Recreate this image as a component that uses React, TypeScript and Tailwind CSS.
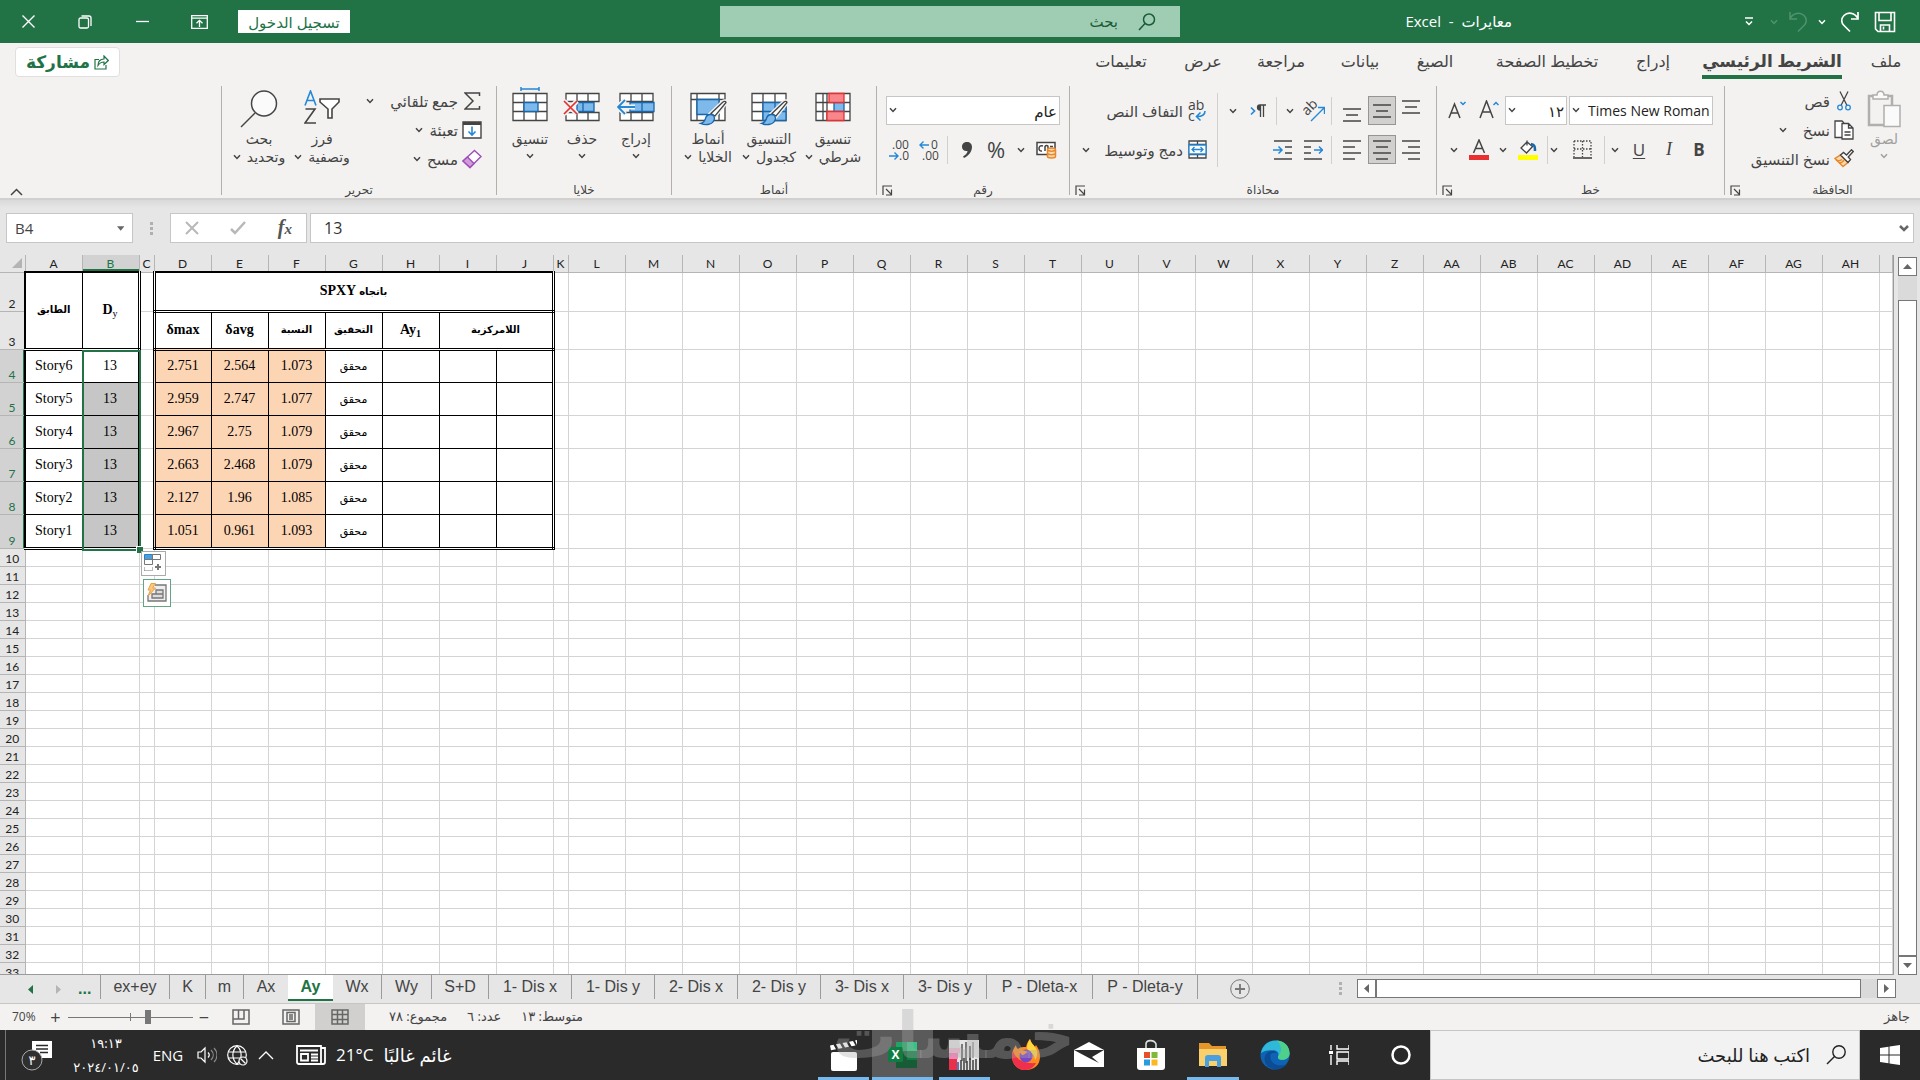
import type { ReactNode } from 'react';
import clsx from 'clsx';

type IconProps = { className?: string };

const INK = '#444444';
const BLUE = '#2488d8';

function Chevron({ className }: IconProps) {
  return (
    <svg viewBox="0 0 8 6" className={clsx('w-2 h-1.5 shrink-0', className)} fill="none" stroke="currentColor" strokeWidth="1.5">
      <path d="M1 1.2 4 4.4 7 1.2" />
    </svg>
  );
}

function Separator({ tall }: { tall?: boolean }) {
  return <div className={clsx('w-px shrink-0 bg-[#d2d0ce]', tall ? 'h-[74px]' : 'h-7')} />;
}

/* ---------- title bar ---------- */

function TitleIcon({ children, label, className }: { children: ReactNode; label: string; className?: string }) {
  return (
    <button type="button" aria-label={label} className={clsx('h-full flex items-center justify-center shrink-0', className)}>
      {children}
    </button>
  );
}

function TitleBar() {
  return (
    <header dir="rtl" className="h-[43px] shrink-0 bg-[#217346] text-white flex items-center justify-between text-[15px]">
      <div className="flex-1 h-full flex items-center pr-6">
        <TitleIcon label="حفظ" className="w-[22px]">
          <svg viewBox="0 0 22 22" className="w-[22px] h-[22px]" fill="none" stroke="#fff" strokeWidth="1.6">
            <path d="M1.5 1.5h19v19H4l-2.5-2.5zM5 1.5v8h12v-8M6.5 20.5V14h9v6.5M9.5 15.5v3" />
          </svg>
        </TitleIcon>
        <TitleIcon label="إعادة" className="w-12">
          <svg viewBox="0 0 20 22" className="w-5 h-[22px]" fill="none" stroke="#fff" strokeWidth="1.7">
            <path d="M18 1v7h-7M18 7.5C15 2 8 .5 4 4.5c-3.5 3.5-2.5 7.5 0 10l6 6" />
          </svg>
        </TitleIcon>
        <Chevron />
        <TitleIcon label="تراجع" className="w-10">
          <svg viewBox="0 0 20 22" className="w-5 h-[22px]" fill="none" stroke="#4f9370" strokeWidth="1.5">
            <path d="M2 1v7h7M2 7.5C5 2 12 .5 16 4.5c3.5 3.5 2.5 7.5 0 10l-6 6" />
          </svg>
        </TitleIcon>
        <Chevron className="text-[#4f9370]" />
        <TitleIcon label="تخصيص" className="w-[42px]">
          <svg viewBox="0 0 10 10" className="w-2.5 h-2.5" fill="none" stroke="#fff" strokeWidth="1.5">
            <path d="M1 1h8M2 4.5l3 3 3-3" />
          </svg>
        </TitleIcon>
        <h1 className="flex-1 pr-[216px] whitespace-nowrap">
          معايرات&nbsp; -&nbsp; Excel
        </h1>
      </div>
      <label className="w-[460px] h-[31px] shrink-0 bg-[#9fcdb3] text-[#185c37] flex items-center pr-6 gap-5">
        <svg viewBox="0 0 18 18" className="w-[18px] h-[18px]" fill="none" stroke="currentColor" strokeWidth="1.5">
          <circle cx="11" cy="6.5" r="5.5" />
          <path d="M7 10.5 1 17" />
        </svg>
        <input aria-label="بحث" placeholder="بحث" className="flex-1 bg-transparent outline-none placeholder:text-[#185c37]" />
      </label>
      <div className="flex-1 h-full flex items-center justify-end pl-1">
        <button type="button" className="h-[23px] w-28 bg-white text-[#217346] leading-5 whitespace-nowrap">
          تسجيل الدخول
        </button>
        <TitleIcon label="خيارات عرض الشريط" className="w-[78px]">
          <svg viewBox="0 0 17 14" className="w-[17px] h-3.5" fill="none" stroke="#fff" strokeWidth="1.3">
            <path d="M.7.7h15.6v12.6H.7zM.7 3.2h15.6M8.5 12V5.500M5.5 8.3l3-3 3 3" />
          </svg>
        </TitleIcon>
        <TitleIcon label="تصغير" className="w-9">
          <svg viewBox="0 0 13 13" className="w-[13px] h-[13px]" stroke="#fff" strokeWidth="1.3"><path d="M0 6.5h13" /></svg>
        </TitleIcon>
        <TitleIcon label="استعادة" className="w-[78px]">
          <svg viewBox="0 0 14 14" className="w-3.5 h-3.5" fill="none" stroke="#fff" strokeWidth="1.3">
            <rect x="1" y="3" width="9.5" height="10" rx="1.5" />
            <path d="M3.5 1h7.5a2 2 0 0 1 2 2v8" />
          </svg>
        </TitleIcon>
        <TitleIcon label="إغلاق" className="w-9">
          <svg viewBox="0 0 13 13" className="w-[13px] h-[13px]" stroke="#fff" strokeWidth="1.4"><path d="M.5.5l12 12M12.5.5l-12 12" /></svg>
        </TitleIcon>
        <span className="w-1.5" />
      </div>
    </header>
  );
}

/* ---------- ribbon ---------- */

const ribbonTabs = [
  { label: 'ملف', width: 'w-[54px]' },
  { label: 'الشريط الرئيسي', width: 'w-[174px]', active: true },
  { label: 'إدراج', width: 'w-[64px]' },
  { label: 'تخطيط الصفحة', width: 'w-[148px]' },
  { label: 'الصيغ', width: 'w-[76px]' },
  { label: 'بيانات', width: 'w-[74px]' },
  { label: 'مراجعة', width: 'w-[84px]' },
  { label: 'عرض', width: 'w-[72px]' },
  { label: 'تعليمات', width: 'w-[92px]' },
];

function RibbonTabs() {
  return (
    <nav dir="rtl" className="flex items-start pr-[7px] pl-[15px] h-9">
      {ribbonTabs.map((tab) => (
        <a
          key={tab.label}
          href="#"
          className={clsx(
            'h-9 flex justify-center leading-9 whitespace-nowrap text-[#444]',
            tab.width,
            tab.active ? 'font-bold text-[17px]' : 'text-[16px]',
          )}
        >
          <span className={clsx('h-9', tab.active && 'border-b-4 border-[#217346]')}>{tab.label}</span>
        </a>
      ))}
      <span className="flex-1" />
      <button
        type="button"
        className="mt-1 h-[30px] w-[105px] rounded-sm border border-[#e1dfdd] bg-white text-[#217346] font-bold text-[17px] leading-6 flex items-center justify-center gap-1"
      >
        <svg viewBox="0 0 15 15" className="w-[15px] h-[15px]" fill="none" stroke="#217346" strokeWidth="1.2">
          <path d="M5 4.5H1V14h11v-4M4 10.5c0-4 2-6.500 6-6.500V1l4.300 4.500L10 9.500V7c-3 0-4.500 1-6 3.500z" />
        </svg>
        مشاركة
      </button>
    </nav>
  );
}

function Group({ label, width, launcher, children }: { label: string; width: string; launcher?: boolean; children: ReactNode }) {
  return (
    <section className={clsx('h-[109px] shrink-0 border-l border-[#b3b0ad] flex flex-col', width)}>
      <div className="flex-1 min-h-0 flex">{children}</div>
      <div className="h-2.5 shrink-0 flex items-center justify-center text-[12px] leading-4">
        <span className="flex-1 text-center">{label}</span>
        {launcher && (
          <button type="button" aria-label={`خيارات ${label}`} className="w-5 flex justify-center">
            <svg viewBox="0 0 11 11" className="w-[11px] h-[11px]" fill="none" stroke={INK} strokeWidth="1.2">
              <path d="M1 10V1h9M4 4l5 5M9.5 4.500V10H4" />
            </svg>
          </button>
        )}
      </div>
    </section>
  );
}

function Tool({ label, className, active, children }: { label: string; className: string; active?: boolean; children: ReactNode }) {
  return (
    <button
      type="button"
      aria-label={label}
      className={clsx('h-[29px] shrink-0 flex items-center justify-center', className, active && 'bg-[#d2d0ce] border border-[#979593]')}
    >
      {children}
    </button>
  );
}

function BigButton({ icon, lines, width, split, muted }: { icon: ReactNode; lines: string[]; width: string; split?: boolean; muted?: boolean }) {
  return (
    <button type="button" className={clsx('shrink-0 flex flex-col items-center pt-1 text-[14px] leading-[18px]', width, muted && 'text-[#a19f9d]')}>
      <span className="h-10 flex items-start">{icon}</span>
      <span className="whitespace-nowrap">{lines[0]}</span>
      {split ? (
        <span className="h-4 flex items-center"><Chevron /></span>
      ) : (
        <span className="flex items-center gap-1.5 whitespace-nowrap">
          {lines[1]}
          <Chevron />
        </span>
      )}
    </button>
  );
}

function SmallButton({ icon, text, drop }: { icon: ReactNode; text: string; drop?: string }) {
  return (
    <button type="button" className="h-[29px] flex items-center text-[15px] leading-5 whitespace-nowrap">
      <span className="w-[26px] pl-0.5 flex justify-center">{icon}</span>
      <span>{text}</span>
      {drop && <Chevron className={drop} />}
    </button>
  );
}

function Combo({ value, label, width, ltr }: { value: string; label: string; width: string; ltr?: boolean }) {
  return (
    <div className={clsx('relative h-[29px] shrink-0', width)}>
      <select
        aria-label={label}
        dir={ltr ? 'ltr' : 'rtl'}
        className={clsx(
          'appearance-none w-full h-full bg-white border border-[#c8c6c4] leading-6 text-[#222] outline-none whitespace-nowrap',
          ltr ? 'pl-[18px] text-[14px]' : 'pr-0.5 text-[15px]',
        )}
      >
        <option>{value}</option>
      </select>
      <Chevron className="absolute left-[3px] top-[11px] pointer-events-none" />
    </div>
  );
}

function PasteIcon() {
  return (
    <svg viewBox="0 0 34 38" className="w-[34px] h-[38px]" fill="#f3f2f1" stroke="#b1afad" strokeWidth="1.5">
      <path d="M2 6h23v29H2z" strokeWidth="2.5" />
      <path d="M6 9V5h4c0-5 7-5 7 0h4v4z" fill="#fafafa" />
      <path d="M17 15.500h16v21H17z" fill="#fafafa" />
    </svg>
  );
}

function CutIcon() {
  return (
    <svg viewBox="0 0 14 20" className="w-3.5 h-5" fill="none" stroke={INK} strokeWidth="1.3">
      <path d="M3 .5l7 14M11 .5l-7 14" />
      <circle cx="3" cy="16.5" r="2.3" stroke={BLUE} />
      <circle cx="11" cy="16.5" r="2.3" stroke={BLUE} />
    </svg>
  );
}

function CopyIcon() {
  return (
    <svg viewBox="0 0 20 20" className="w-5 h-5" fill="#fff" stroke={INK} strokeWidth="1.3">
      <path d="M8 17.5H1V1h7l2 2" />
      <path d="M8 3.5h6.500L19 8v11H8zM14.500 3.500V8H19M10.500 12h6M10.500 15h6" />
    </svg>
  );
}

function FormatPainterIcon() {
  return (
    <svg viewBox="0 0 20 19" className="w-5 h-[19px]" fill="none" strokeWidth="1.4">
      <path d="M1 9.5 9 17.500l5-4L6.500 6z" fill="#fbd9ad" stroke="#e8872b" />
      <path d="M2 11c2 1 4 1 6-.5M5 14c2 0 4-1 5-3" stroke="#e8872b" />
      <path d="M6.500 6l3-2.500 3 2.500L17.500.8l1.700 1.700-5 5.500 2.300 2.500-2.500 3z" fill="#fff" stroke={INK} />
    </svg>
  );
}

const lineSets = {
  right: [[1, 1, 18], [7, 7, 12], [1, 13, 18], [7, 19, 12]],
  center: [[1, 1, 18], [4, 7, 12], [1, 13, 18], [4, 19, 12]],
  left: [[1, 1, 18], [1, 7, 12], [1, 13, 18], [1, 19, 12]],
};

function Lines({ kind }: { kind: keyof typeof lineSets }) {
  return (
    <svg viewBox="0 0 20 20" className="w-5 h-5 shrink-0" stroke={INK} strokeWidth="1.5">
      {lineSets[kind].map(([x, y, w]) => (
        <path key={y} d={`M${x} ${y}h${w}`} />
      ))}
    </svg>
  );
}

function ThreeLines() {
  return (
    <svg viewBox="0 0 20 14" className="w-5 h-3.5" stroke={INK} strokeWidth="1.5">
      <path d="M1 1h18M4 7h12M1 13h18" />
    </svg>
  );
}

function IndentIcon({ flip }: { flip?: boolean }) {
  return (
    <svg viewBox="0 0 20 20" className="w-5 h-5" fill="none" stroke={INK} strokeWidth="1.5">
      <path d={flip ? 'M1 1h18M12 7h7M12 13h7M1 19h18' : 'M1 1h18M1 7h7M1 13h7M1 19h18'} />
      <path d={flip ? 'M0 10h9M5.500 6.500 9 10l-3.500 3.500' : 'M11 10h9M16 6.500 19.500 10 16 13.500'} stroke={BLUE} />
    </svg>
  );
}

function TableGrid({ children }: { children?: ReactNode }) {
  return (
    <svg viewBox="0 0 36 36" className="w-9 h-9 overflow-visible" fill="none" strokeWidth="1.3">
      <path d="M1 3.5h34v27H1z" fill="#fff" stroke={INK} />
      <path d="M1 12.5h34M1 21.500h34M12 3.500v27M24 3.500v27" stroke={INK} />
      {children}
    </svg>
  );
}

function Brush() {
  return (
    <>
      <path d="M36 12.500 25 26l-4-2.500L33 12c1-1 3-1 3 .5z" fill="#fff" stroke="#f3f2f1" strokeWidth="4" />
      <path d="M36 12.500 25 26l-4-2.500L33 12c1-1 3-1 3 .5z" fill="#fff" stroke={INK} />
      <path d="M20.500 24.500c2 0 4 1.500 4 4-1 6-8 7.500-14 5 3-.5 4-2 5-5 .5-2 2.500-4 5-4z" fill="#7db9ea" stroke="#1866ab" />
    </>
  );
}

function DecimalIcon({ grow }: { grow?: boolean }) {
  return (
    <svg viewBox="0 0 20 22" direction="ltr" className="w-5 h-[22px]" fill={INK} fontSize="12" fontFamily="Open Sans">
      <text x={grow ? 12 : 3} y="10">{grow ? '0' : '.00'}</text>
      <text x={grow ? 3 : 10} y="21">{grow ? '.00' : '.0'}</text>
      <path
        d={grow ? 'M10 6H1M4.500 2.500 1 6l3.500 3.500' : 'M0 17h9M5.500 13.500 9 17l-3.500 3.500'}
        fill="none"
        stroke={BLUE}
        strokeWidth="1.4"
      />
    </svg>
  );
}

function Ribbon() {
  return (
    <div dir="rtl" className="shrink-0 h-[157px] bg-[#f3f2f1] text-[#444] border-b-2 border-[#d2d0ce]">
      <RibbonTabs />
      <div className="flex pt-[7px] h-[121px]">
        <Group label="الحافظة" width="w-[196px]" launcher>
          <div className="w-16 pr-3">
            <BigButton icon={<PasteIcon />} lines={['لصق']} width="w-[48px]" split muted />
          </div>
          <div className="flex flex-col items-start">
            <SmallButton icon={<CutIcon />} text="قص" />
            <SmallButton icon={<CopyIcon />} text="نسخ" drop="mr-4" />
            <SmallButton icon={<FormatPainterIcon />} text="نسخ التنسيق" />
          </div>
        </Group>

        <Group label="خط" width="w-[288px]" launcher>
          <div className="flex flex-col pt-2.5 pr-[11px] gap-2.5">
            <div className="flex gap-0.5">
              <Combo label="الخط" value="Times New Roman" width="w-36" ltr />
              <Combo label="حجم الخط" value="١٢" width="w-[62px]" />
              <Tool label="تكبير الخط" className="w-7">
                <svg viewBox="0 0 20 22" className="w-5 h-[22px]" fill="none" stroke={INK} strokeWidth="1.5">
                  <path d="M1 18 7.500 1 14 18M3.500 12h8" />
                  <path d="M14.500 5 17 2.500 19.500 5" stroke={BLUE} />
                </svg>
              </Tool>
              <Tool label="تصغير الخط" className="w-8">
                <svg viewBox="0 0 20 22" className="w-5 h-[22px]" fill="none" stroke={INK} strokeWidth="1.5">
                  <path d="M2 18 7.500 4 13 18M4 13h7" />
                  <path d="M13.500 2l2.500 2.500L18.500 2" stroke={BLUE} />
                </svg>
              </Tool>
            </div>
            <div className="flex items-center">
              <Tool label="غامق" className="w-7 font-bold text-[17px]">B</Tool>
              <Tool label="مائل" className="w-8 text-[18px] italic [font-family:'Liberation_Serif',serif]">I</Tool>
              <Tool label="تسطير" className="w-7 text-[17px] underline underline-offset-2">U</Tool>
              <Tool label="المزيد" className="w-5"><Chevron /></Tool>
              <Separator />
              <Tool label="حدود" className="w-11">
                <svg viewBox="0 0 19 19" className="w-[19px] h-[19px]" fill="none" stroke={INK} strokeWidth="1.3">
                  <path d="M1 1h17v16M1 1v16M9.500 1v16M1 9h17" strokeDasharray="1.500 1.500" />
                  <path d="M0 18h19" strokeWidth="1.6" />
                </svg>
              </Tool>
              <Tool label="المزيد" className="w-3"><Chevron /></Tool>
              <Separator />
              <Tool label="لون التعبئة" className="w-[38px]">
                <svg viewBox="0 0 20 21" className="w-5 h-[21px]" fill="none" stroke={INK} strokeWidth="1.3">
                  <path d="M9 3 3 9l5.500 5 6-6.500zM9 6.500V1.500" fill="#fff" />
                  <path d="M13 5c4 .5 4 3 4 7" stroke="#1866ab" strokeWidth="2.5" />
                  <path d="M0 18.500h20" stroke="#ffff00" strokeWidth="5" />
                </svg>
              </Tool>
              <Tool label="المزيد" className="w-3"><Chevron /></Tool>
              <Tool label="لون الخط" className="w-9">
                <svg viewBox="0 0 20 21" className="w-5 h-[21px]" fill="none" stroke={INK} strokeWidth="1.5">
                  <path d="M4.500 14 10 1l5.500 13M6.500 9.500h7" />
                  <path d="M0 18.500h20" stroke="#e83030" strokeWidth="5" />
                </svg>
              </Tool>
              <Tool label="المزيد" className="w-3.5"><Chevron /></Tool>
            </div>
          </div>
        </Group>

        <Group label="محاذاة" width="w-[367px]" launcher>
          <div className="flex flex-col pt-2.5 pr-2.5 gap-2.5">
            <div className="flex items-center">
              <Tool label="محاذاة لأعلى" className="w-[30px] pb-2"><ThreeLines /></Tool>
              <Tool label="محاذاة للوسط" className="w-7" active><ThreeLines /></Tool>
              <Tool label="محاذاة لأسفل" className="w-8 pt-2"><ThreeLines /></Tool>
              <span className="w-1" />
              <Separator />
              <Tool label="الاتجاه" className="w-[34px]">
                <svg viewBox="0 0 22 22" direction="ltr" className="w-[22px] h-[22px]" fill={INK}>
                  <text x="0" y="13" fontSize="14" fontFamily="Open Sans" transform="rotate(-45 6 10)">ab</text>
                  <path d="M8 21 21 8M15 7.500h6.500V14" fill="none" stroke={BLUE} strokeWidth="1.4" />
                </svg>
              </Tool>
              <Tool label="المزيد" className="w-3.5"><Chevron /></Tool>
              <span className="w-1.5" />
              <Separator />
              <Tool label="اتجاه النص" className="w-9">
                <svg viewBox="0 0 18 14" className="w-[18px] h-3.5" fill="none" stroke={INK} strokeWidth="1.3">
                  <path d="M17 1h-6M11 6a2.500 2.500 0 0 1 0-5zM11.500 1v12M14.500 1v12" fill={INK} />
                  <path d="M2 3.500 5.500 7 2 10.500" stroke={BLUE} strokeWidth="1.7" />
                </svg>
              </Tool>
              <Tool label="المزيد" className="w-3.5"><Chevron /></Tool>
            </div>
            <div className="flex items-center">
              <Tool label="محاذاة لليمين" className="w-[30px]"><Lines kind="right" /></Tool>
              <Tool label="توسيط" className="w-7" active><Lines kind="center" /></Tool>
              <Tool label="محاذاة لليسار" className="w-8"><Lines kind="left" /></Tool>
              <span className="w-1" />
              <Separator />
              <Tool label="إنقاص المسافة" className="w-9"><IndentIcon /></Tool>
              <Tool label="زيادة المسافة" className="w-6"><IndentIcon flip /></Tool>
            </div>
          </div>
          <div className="pt-[7px] pr-2"><Separator tall /></div>
          <div className="flex flex-col pt-2.5 pr-2 gap-2.5 items-start">
            <SmallButton
              icon={
                <svg viewBox="0 0 18 22" direction="ltr" className="w-[18px] h-[22px]" fill={INK}>
                  <text x="0" y="10" fontSize="14" fontFamily="Open Sans">ab</text>
                  <text x="0" y="21" fontSize="14" fontFamily="Open Sans">c</text>
                  <path d="M17 11c0 4-3 5.500-8 5.500M12.500 12.500l-4 4 4 4" fill="none" stroke={BLUE} strokeWidth="1.6" />
                </svg>
              }
              text="التفاف النص"
            />
            <SmallButton
              icon={
                <svg viewBox="0 0 19 19" className="w-[19px] h-[19px]" fill="#fff" stroke={INK} strokeWidth="1.3">
                  <path d="M1 1h17v17H1zM1 4.500h17M1 14.500h17M9.500 1v3M9.500 15v3" />
                  <path d="M1 5h17v9H1zM4 9.500h11M6.500 7 4 9.500 6.500 12M12.500 7 15 9.500 12.500 12" stroke={BLUE} />
                </svg>
              }
              text="دمج وتوسيط"
              drop="mr-3.5"
            />
          </div>
        </Group>

        <Group label="رقم" width="w-[193px]" launcher>
          <div className="flex flex-col pt-2.5 pr-[9px] gap-2.5">
            <Combo label="تنسيق الأرقام" value="عام" width="w-[174px]" />
            <div className="flex items-center">
              <Tool label="تنسيق محاسبة" className="w-7">
                <svg viewBox="0 0 21 18" className="w-[21px] h-[18px]" fill="none" stroke={INK} strokeWidth="1.5">
                  <path d="M1 1.500h18v12H1z" fill="#fff" />
                  <path d="M7 5c-3-1-4 1-4 2.500S4 10.500 6 10M9 10V5.500c1-1.500 3-1 3 0V10M14 5.500h3" />
                  <path d="M11 9h9v8h-9z" fill="#f3f2f1" stroke="none" />
                  <path d="M11.500 8.500c0-2 8-2 8 0v7c0 2-8 2-8 0zM11.500 9c1 1.500 7 1.500 8 0M11.500 12.500c1 1.500 7 1.500 8 0" fill="#fbd9ad" stroke="#e8872b" />
                </svg>
              </Tool>
              <Tool label="المزيد" className="w-[22px]"><Chevron /></Tool>
              <Tool label="نمط النسبة" className="w-7 text-[22px]">%</Tool>
              <Tool label="نمط الفاصلة" className="w-[30px]">
                <svg viewBox="0 0 10 16" className="w-2.5 h-4" fill={INK}>
                  <path d="M5 0c3 0 5 2 5 5 0 5-4 9-8 11l-1-1.500C3.500 13 5.500 11 5.500 9 2 9.500 0 7.500 0 4.800 0 2 2 0 5 0z" />
                </svg>
              </Tool>
              <span className="w-1" />
              <Separator />
              <Tool label="زيادة الخانات" className="w-9"><DecimalIcon grow /></Tool>
              <Tool label="إنقاص الخانات" className="w-6"><DecimalIcon /></Tool>
            </div>
          </div>
        </Group>

        <Group label="أنماط" width="w-[205px]">
          <div className="flex pr-2.5">
            <BigButton
              width="w-[66px]"
              lines={['تنسيق', 'شرطي']}
              icon={
                <TableGrid>
                  <path d="M8 3.500v27" stroke={INK} />
                  <path d="M19 12.500h10v9H19z" fill="#7db9ea" stroke="#1866ab" />
                  <path d="M14 3.500h15v9H14zM12 21.500h17v9H12z" fill="#f9868b" stroke="#e83030" />
                </TableGrid>
              }
            />
            <BigButton
              width="w-[62px]"
              lines={['التنسيق', 'كجدول']}
              icon={
                <TableGrid>
                  <path d="M12 12.500h23v18H12z" fill="#7db9ea" stroke="#1866ab" />
                  <path d="M12 21.500h23M24 12.500v18" stroke="#1866ab" />
                  <Brush />
                </TableGrid>
              }
            />
            <BigButton
              width="w-[60px]"
              lines={['أنماط', 'الخلايا']}
              icon={
                <svg viewBox="0 0 36 36" className="w-9 h-9 overflow-visible" fill="none" strokeWidth="1.3">
                  <path d="M1 3.500h34v27H1zM1 9.500h34M7 3.500v27M29 3.500v27" fill="#fff" stroke={INK} />
                  <path d="M7 9.500h22v15H7z" fill="#7db9ea" stroke="#1866ab" />
                  <Brush />
                </svg>
              }
            />
          </div>
        </Group>

        <Group label="خلايا" width="w-[175px]">
          <div className="flex pr-2">
            <BigButton
              width="w-[54px]"
              split
              lines={['إدراج']}
              icon={
                <svg viewBox="0 0 38 36" className="w-[38px] h-9" fill="none" strokeWidth="1.3">
                  <path d="M3 3.500h33v8H3zM3 22.500h33v8H3zM14 3.500v8M25 3.500v8M14 22.500v8M25 22.500v8" fill="#fff" stroke={INK} />
                  <path d="M13 12.500h24v9H13zM25 12.500v9" fill="#7db9ea" stroke="#1866ab" />
                  <path d="M18 17H1M8 10l-7 7 7 7" stroke="#f3f2f1" strokeWidth="5" />
                  <path d="M18 17H1M8 10l-7 7 7 7" stroke={BLUE} strokeWidth="1.8" />
                </svg>
              }
            />
            <BigButton
              width="w-[54px]"
              split
              lines={['حذف']}
              icon={
                <svg viewBox="0 0 38 36" className="w-[38px] h-9" fill="none" strokeWidth="1.3">
                  <path d="M3 3.500h33v8H3zM3 22.500h33v8H3zM14 3.500v8M25 3.500v8M14 22.500v8M25 22.500v8" fill="#fff" stroke={INK} />
                  <path d="M14 12.500h17v9H14zM20 12.500v9" fill="#7db9ea" stroke="#1866ab" />
                  <path d="M1 11l13 13M14 11 1 24" stroke="#f3f2f1" strokeWidth="5" />
                  <path d="M1 11l13 13M14 11 1 24" stroke="#e83030" strokeWidth="1.7" />
                </svg>
              }
            />
            <BigButton
              width="w-[50px]"
              split
              lines={['تنسيق']}
              icon={
                <TableGrid>
                  <path d="M12 12.500h14v9H12z" fill="#7db9ea" stroke="#1866ab" />
                  <path d="M9-1h18M9-3v4M27-3v4" stroke={BLUE} strokeWidth="1.5" />
                </TableGrid>
              }
            />
          </div>
        </Group>

        <Group label="تحرير" width="w-[275px]">
          <div className="flex flex-col items-start w-[141px] pr-3">
            <SmallButton
              icon={
                <svg viewBox="0 0 17 18" className="w-[17px] h-[18px]" fill="none" stroke={INK} strokeWidth="1.5">
                  <path d="M15.500 4V1H1l8 8-8 8h14.500v-3" />
                </svg>
              }
              text="جمع تلقائي"
              drop="mr-4"
            />
            <SmallButton
              icon={
                <svg viewBox="0 0 20 18" className="w-5 h-[18px]" fill="none" stroke={INK} strokeWidth="1.4">
                  <path d="M1 1h18v16H1z" fill="#fff" />
                  <path d="M1 2.500h18" strokeWidth="3" />
                  <path d="M10 5.500V14M6.500 10.500 10 14l3.500-3.500" stroke={BLUE} strokeWidth="1.6" />
                </svg>
              }
              text="تعبئة"
              drop="mr-1.5"
            />
            <SmallButton
              icon={
                <svg viewBox="0 0 20 20" className="w-5 h-5" fill="#fff" stroke="#9b4fb8" strokeWidth="1.4">
                  <path d="M12.500 1.500 19 7.500 8 18.500 1 12z" />
                  <path d="M5.500 8 12 14.500l-4 4L1 12z" fill="#d59ad9" />
                </svg>
              }
              text="مسح"
              drop="mr-1.5"
            />
          </div>
          <BigButton
            width="w-[66px]"
            lines={['فرز', 'وتصفية']}
            icon={
              <svg viewBox="0 0 36 36" className="w-9 h-9" fill="none" strokeWidth="1.6">
                <path d="M1 15.500 6.500 1 12 15.500M3 10.500h7" stroke={BLUE} />
                <path d="M1.500 19H11L1 33h11" stroke={INK} />
                <path d="M16 9h19v3l-7 7v9h-4v-9l-8-7z" stroke={INK} fill="#fff" />
              </svg>
            }
          />
          <BigButton
            width="w-[60px]"
            lines={['بحث', 'وتحديد']}
            icon={
              <svg viewBox="0 0 38 38" className="w-[38px] h-[38px]" fill="none" stroke={INK} strokeWidth="1.5">
                <circle cx="24" cy="13.5" r="12.5" fill="#fafafa" />
                <path d="M15 23 1 37" />
              </svg>
            }
          />
        </Group>
        <div className="flex-1 flex items-end justify-end pl-2.5 pb-1">
          <button type="button" aria-label="طي الشريط">
            <svg viewBox="0 0 13 8" className="w-[13px] h-2" fill="none" stroke={INK} strokeWidth="1.5"><path d="M1 7l5.500-5.500L12 7" /></svg>
          </button>
        </div>
      </div>
    </div>
  );
}

/* ---------- formula bar ---------- */

function Dots() {
  return (
    <span className="flex flex-col gap-0.5">
      <i className="size-[3px] bg-[#b0b0b0]" />
      <i className="size-[3px] bg-[#b0b0b0]" />
      <i className="size-[3px] bg-[#b0b0b0]" />
    </span>
  );
}

function FormulaBar() {
  return (
    <div className="shrink-0 h-[55px] pt-[13px] pl-1.5 pr-1.5 flex bg-linear-to-b from-[#dadada] from-0% to-[#e6e6e6] to-15%">
      <div className="h-[30px] w-[127px] border border-[#c6c6c6] bg-white flex items-center px-2">
        <input aria-label="مربع الاسم" defaultValue="B4" className="w-full text-[15px] leading-5 text-[#444] outline-none" />
        <svg viewBox="0 0 8 5" className="w-2 h-[5px]" fill="#666"><path d="M0 0h8L4 5z" /></svg>
      </div>
      <span className="w-[37px] h-[30px] flex items-center justify-center"><Dots /></span>
      <div className="h-[30px] w-[137px] mr-[3px] border border-[#c6c6c6] bg-white flex items-center justify-between px-3.5 text-[#b8b8b8]">
        <button type="button" aria-label="إلغاء">
          <svg viewBox="0 0 14 14" className="w-3.5 h-3.5" stroke="currentColor" strokeWidth="2"><path d="M1 1l12 12M13 1 1 13" /></svg>
        </button>
        <button type="button" aria-label="إدخال">
          <svg viewBox="0 0 16 14" className="w-4 h-3.5" fill="none" stroke="currentColor" strokeWidth="2.5"><path d="M1 8l4 4L15 1" /></svg>
        </button>
        <button type="button" aria-label="إدراج دالة" className="text-[#555] text-[20px] leading-6 italic font-bold [font-family:'Liberation_Serif',serif]">
          f<span className="text-[15px]">x</span>
        </button>
      </div>
      <div className="h-[30px] flex-1 border border-[#c6c6c6] bg-white flex items-center pl-[13px] pr-1">
        <input aria-label="شريط الصيغة" defaultValue="13" className="flex-1 text-[16px] leading-5 text-[#333] outline-none" />
        <svg viewBox="0 0 10 7" className="w-2.5 h-[7px]" fill="none" stroke="#666" strokeWidth="2.5"><path d="M1 1l4 4 4-4" /></svg>
      </div>
    </div>
  );
}

/* ---------- sheet ---------- */

const columns = [
  'A', 'B', 'C', 'D', 'E', 'F', 'G', 'H', 'I', 'J', 'K', 'L', 'M', 'N', 'O', 'P', 'Q', 'R', 'S', 'T', 'U', 'V', 'W', 'X', 'Y', 'Z',
  'AA', 'AB', 'AC', 'AD', 'AE', 'AF', 'AG', 'AH', '',
];

const stories = [
  { row: 4, name: 'Story6', max: '2.751', avg: '2.564', ratio: '1.073' },
  { row: 5, name: 'Story5', max: '2.959', avg: '2.747', ratio: '1.077' },
  { row: 6, name: 'Story4', max: '2.967', avg: '2.75', ratio: '1.079' },
  { row: 7, name: 'Story3', max: '2.663', avg: '2.468', ratio: '1.079' },
  { row: 8, name: 'Story2', max: '2.127', avg: '1.96', ratio: '1.085' },
  { row: 9, name: 'Story1', max: '1.051', avg: '0.961', ratio: '1.093' },
];

const emptyRows = Array.from({ length: 24 }, (_, i) => i + 10);

const blank = 'border border-[#d4d4d4]';
const cell = 'border border-black';
const head = 'border border-black font-bold';

function Blanks({ from, count }: { from: string; count: number }) {
  return Array.from({ length: count }, (_, i) => <td key={`${from}${i}`} className={blank} />);
}

function RowHead({ n, selected }: { n: number; selected?: boolean }) {
  return (
    <th
      className={clsx(
        "border border-l-0 border-[#b5b5b5] align-bottom font-normal text-[12px] leading-[14px] [font-family:'Lato','Open_Sans',sans-serif]",
        selected ? 'bg-[#d2d2d2] text-[#217346] shadow-[inset_-1px_0_0_#217346]' : 'bg-[#e6e6e6] text-[#222]',
      )}
    >
      {n}
    </th>
  );
}

function Selection() {
  return (
    <div className="absolute -top-px -left-px w-[59px] h-[201px] border-2 border-[#217346] z-10">
      <i className="absolute -right-1 -bottom-1 size-1.5 bg-[#217346] border-l border-t border-white box-content" />
      <button type="button" aria-label="خيارات التعبئة التلقائية" className="absolute left-[57px] top-[199px] w-[25px] h-[25px] bg-white border border-[#ababab] flex items-center justify-center">
        <svg viewBox="0 0 18 18" className="w-[18px] h-[18px]" fill="none" stroke="#777">
          <path d="M.5.5h8v5h-8z" fill="#4a9fe0" stroke="#2b7fc0" />
          <path d="M8.500.5h8v5h-8zM.5 5.500h8v5h-8z" />
          <path d="M.5 16.500v-4M.5 16.500h8v-4" strokeDasharray="1 1" />
          <path d="M14 10v6M11 13h6" strokeWidth="2" />
        </svg>
      </button>
      <button type="button" aria-label="تحليل سريع" className="absolute left-[59px] top-[227px] w-7 h-7 bg-white border border-[#63a583] flex items-center justify-center">
        <svg viewBox="0 0 20 20" className="w-5 h-5" fill="none" stroke="#777" strokeWidth="1.3">
          <path d="M8 2h11v16H1v-6" fill="#eee" />
          <path d="M9 7h7v4H9zM5 11h11v4H5z" fill="#ddd" />
          <path d="M4 .5 1 7h2.500L1 13l7.500-8H5.500L8.500.5z" fill="#fbc979" stroke="#e8a04b" strokeWidth="1" />
        </svg>
      </button>
    </div>
  );
}

function Sheet() {
  return (
    <div className="flex-1 min-h-0 flex bg-[#e6e6e6]">
      <div className="flex-1 min-w-0 overflow-hidden bg-white border-r border-b border-[#9b9b9b]">
        <table className="w-full table-fixed border-collapse text-center text-[14px] leading-4 text-black [font-family:'Liberation_Serif','DejaVu_Sans',serif]">
          <colgroup>
            <col className="w-[25px]" />
            {columns.map((c) => (
              <col key={c || 'rest'} className={c === '' ? '' : c === 'C' || c === 'K' ? 'w-[15px]' : 'w-[57px]'} />
            ))}
          </colgroup>
          <thead className="[font-family:'Lato','Open_Sans',sans-serif] text-[12px] leading-[15px]">
            <tr className="h-[17px]">
              <th className="bg-[#e6e6e6] border-r border-b border-[#b5b5b5] p-0">
                <svg viewBox="0 0 10 10" className="w-2.5 h-2.5 ml-3" fill="#b4b4b4"><path d="M10 0v10H0z" /></svg>
              </th>
              {columns.map((c) => (
                <th
                  key={c || 'rest'}
                  className={clsx(
                    'p-0 font-normal border-x border-b border-[#b5b5b5]',
                    c === 'B' ? 'bg-[#d2d2d2] text-[#217346] shadow-[inset_0_-2px_0_#217346]' : 'bg-[#e6e6e6] text-[#222]',
                  )}
                >
                  {c}
                </th>
              ))}
            </tr>
          </thead>
          <tbody>
            <tr className="h-[39px]">
              <RowHead n={2} />
              <td rowSpan={2} className={clsx(head, 'border-2 border-r border-b-[3px] [border-bottom-style:double] text-[10px]')}>الطابق</td>
              <td rowSpan={2} className={clsx(head, 'border-t-2 border-b-[3px] border-r-[3px] [border-bottom-style:double] [border-right-style:double]')}>
                D<sub className="text-[10px] font-normal">y</sub>
              </td>
              <td className={blank} />
              <td colSpan={7} className={clsx(head, 'border-t-2 border-x-[3px] border-b-[3px] border-double [border-top-style:solid]')}>
                SPXY <span className="text-[10px]">باتجاه</span>
              </td>
              <Blanks from="r2" count={25} />
            </tr>
            <tr className="h-[38px]">
              <RowHead n={3} />
              <td className={blank} />
              <td className={clsx(head, 'border-l-[3px] border-b-[3px] [border-left-style:double] [border-bottom-style:double]')}>δmax</td>
              <td className={clsx(head, 'border-b-[3px] [border-bottom-style:double]')}>δavg</td>
              <td className={clsx(head, 'border-b-[3px] [border-bottom-style:double] text-[10px]')}>النسبة</td>
              <td className={clsx(head, 'border-b-[3px] [border-bottom-style:double] text-[10px]')}>التحقيق</td>
              <td className={clsx(head, 'border-b-[3px] [border-bottom-style:double]')}>
                Ay<sub className="text-[10px]">1</sub>
              </td>
              <td colSpan={2} className={clsx(head, 'border-b-[3px] border-r-[3px] [border-bottom-style:double] [border-right-style:double] text-[10px]')}>
                اللامركزية
              </td>
              <Blanks from="r3" count={25} />
            </tr>
            {stories.map((s, i) => {
              const isLast = i === stories.length - 1;
              const last = isLast && 'border-b-[3px] [border-bottom-style:double]';
              return (
                <tr key={s.row} className={isLast ? 'h-[34px]' : 'h-[33px]'}>
                  <RowHead n={s.row} selected />
                  <td className={clsx(cell, 'border-l-2', last)}>{s.name}</td>
                  <td className={clsx(cell, 'border-r-[3px] [border-right-style:double]', last, i === 0 ? 'relative' : 'bg-[#c6c6c6]')}>
                    13
                    {i === 0 && <Selection />}
                  </td>
                  <td className={blank} />
                  <td className={clsx(cell, 'bg-[#fcd5b4] border-l-[3px] [border-left-style:double]', last)}>{s.max}</td>
                  <td className={clsx(cell, 'bg-[#fcd5b4]', last)}>{s.avg}</td>
                  <td className={clsx(cell, 'bg-[#fcd5b4]', last)}>{s.ratio}</td>
                  <td className={clsx(cell, 'text-[11px]', last)}>محقق</td>
                  <td className={clsx(cell, last)} />
                  <td className={clsx(cell, last)} />
                  <td className={clsx(cell, 'border-r-[3px] [border-right-style:double]', last)} />
                  <Blanks from={`r${s.row}`} count={25} />
                </tr>
              );
            })}
            {emptyRows.map((n) => (
              <tr key={n} className="h-[18px]">
                <RowHead n={n} />
                <Blanks from={`r${n}`} count={35} />
              </tr>
            ))}
          </tbody>
        </table>
      </div>
      <div className="w-[26px] shrink-0 flex flex-col items-stretch pl-1 pr-[3px]">
        <button type="button" aria-label="تمرير لأعلى" className="mt-0.5 h-[19px] border border-[#777] bg-white flex items-center justify-center">
          <svg viewBox="0 0 9 5" className="w-[9px] h-[5px]" fill="#666"><path d="M0 5h9L4.500 0z" /></svg>
        </button>
        <div className="h-6 bg-[#dadada]" />
        <div className="flex-1 border border-[#777] bg-white" />
        <button type="button" aria-label="تمرير لأسفل" className="h-[19px] border border-[#777] bg-white flex items-center justify-center">
          <svg viewBox="0 0 9 5" className="w-[9px] h-[5px]" fill="#666"><path d="M0 0h9L4.500 5z" /></svg>
        </button>
      </div>
    </div>
  );
}

const sheetTabs = [
  { name: 'ex+ey', width: 'w-[70px]' },
  { name: 'K', width: 'w-9' },
  { name: 'm', width: 'w-[38px]' },
  { name: 'Ax', width: 'w-11' },
  { name: 'Ay', width: 'w-[45px]', active: true },
  { name: 'Wx', width: 'w-[49px]' },
  { name: 'Wy', width: 'w-[50px]' },
  { name: 'S+D', width: 'w-[57px]' },
  { name: '1- Dis x', width: 'w-[83px]' },
  { name: '1- Dis y', width: 'w-[83px]' },
  { name: '2- Dis x', width: 'w-[83px]' },
  { name: '2- Dis y', width: 'w-[83px]' },
  { name: '3- Dis x', width: 'w-[83px]' },
  { name: '3- Dis y', width: 'w-[83px]' },
  { name: 'P - Dleta-x', width: 'w-[106px]' },
  { name: 'P - Dleta-y', width: 'w-[105px]' },
];

function SheetTabs() {
  return (
    <div className="shrink-0 h-7 bg-[#e6e6e6] flex items-start text-[16px] text-[#444] [font-family:'Liberation_Sans',sans-serif]">
      <div className="w-[100px] h-7 pl-7 flex items-center">
        <svg viewBox="0 0 5 9" className="w-[5px] h-[9px] mr-[23px]" fill="#217346"><path d="M5 0v9L0 4.500z" /></svg>
        <svg viewBox="0 0 5 9" className="w-[5px] h-[9px] mr-[17px]" fill="#b5b5b5"><path d="M0 0v9l5-4.500z" /></svg>
        <span className="font-bold text-[#217346]">...</span>
      </div>
      {sheetTabs.map((tab, i) => (
        <a
          key={tab.name}
          href="#"
          className={clsx(
            'shrink-0 text-center leading-[23px] whitespace-nowrap',
            tab.width,
            tab.active ? 'h-[26px] bg-white text-[#217346] font-bold border-b-2 border-[#217346]' : 'h-6',
          )}
        >
          <span
            className={clsx(
              'block h-6',
              !tab.active && tab.name !== 'Ax' && 'border-r border-[#9b9b9b]',
              i === 0 && 'border-l',
            )}
          >
            {tab.name}
          </span>
        </a>
      ))}
      <button type="button" aria-label="ورقة جديدة" className="ml-8 mt-1 w-5 h-5">
        <svg viewBox="0 0 20 20" className="w-5 h-5" fill="none" stroke="#777">
          <circle cx="10" cy="10" r="9.3" />
          <path d="M10 5v10M5 10h10" strokeWidth="1.8" />
        </svg>
      </button>
      <span className="flex-1" />
      <div className="w-[557px] h-[19px] mt-1 mr-6 flex items-center">
        <Dots />
        <button type="button" aria-label="تمرير لليسار" className="ml-[15px] w-[19px] h-[19px] border border-[#777] bg-white flex items-center justify-center">
          <svg viewBox="0 0 5 9" className="w-[5px] h-[9px]" fill="#666"><path d="M5 0v9L0 4.500z" /></svg>
        </button>
        <div className="flex-1 h-[19px] border border-[#777] bg-white" />
        <div className="w-4 h-[19px] bg-[#dadada]" />
        <button type="button" aria-label="تمرير لليمين" className="w-[19px] h-[19px] border border-[#777] bg-white flex items-center justify-center">
          <svg viewBox="0 0 5 9" className="w-[5px] h-[9px]" fill="#666"><path d="M0 0v9l5-4.500z" /></svg>
        </button>
      </div>
    </div>
  );
}

function StatusBar() {
  return (
    <div className="shrink-0 h-[27px] border-t border-[#c6c6c6] bg-[#f3f2f1] flex items-center justify-between pr-2.5 text-[13px] text-[#444]">
      <div className="h-full flex items-center">
        <span className="w-[49px] pl-3 text-[12px]">70%</span>
        <button type="button" aria-label="تكبير" className="w-[13px] text-[18px] leading-5 text-center">+</button>
        <div className="relative w-[125px] h-[18px] ml-1.5 flex items-center">
          <i className="absolute left-[62px] top-[5px] w-px h-2 bg-[#777]" />
          <input
            type="range"
            dir="rtl"
            aria-label="تكبير/تصغير"
            defaultValue={35}
            className="relative appearance-none w-full h-px bg-[#777] outline-none [&::-webkit-slider-thumb]:appearance-none [&::-webkit-slider-thumb]:w-1.5 [&::-webkit-slider-thumb]:h-3.5 [&::-webkit-slider-thumb]:bg-[#777]"
          />
        </div>
        <button type="button" aria-label="تصغير" className="w-[22px] text-[18px] leading-5 text-center">−</button>
        <button type="button" aria-label="معاينة فواصل الصفحات" className="w-[51px] h-full flex items-center justify-center">
          <svg viewBox="0 0 18 16" className="w-[18px] h-4" fill="none" stroke="#666" strokeWidth="1.5"><path d="M1 1h16v14H1zM1 10h11V1M6.500 1v9" /></svg>
        </button>
        <button type="button" aria-label="تخطيط الصفحة" className="w-[49px] h-full flex items-center justify-center">
          <svg viewBox="0 0 18 16" className="w-[18px] h-4" fill="none" stroke="#666" strokeWidth="1.5"><path d="M1 1h16v14H1zM5 3.500h8v9H5zM7 6h4M7 8h4M7 10h4" /></svg>
        </button>
        <button type="button" aria-label="عادي" className="w-[50px] h-full bg-[#d2d0ce] flex items-center justify-center">
          <svg viewBox="0 0 18 16" className="w-[18px] h-4" fill="none" stroke="#666" strokeWidth="1.5"><path d="M1 1h16v14H1zM1 5.500h16M1 10.500h16M6.500 1v14M11.500 1v14" /></svg>
        </button>
        <div dir="rtl" className="ml-6 flex gap-5">
          <span>متوسط: ١٣</span>
          <span>عدد: ٦</span>
          <span>مجموع: ٧٨</span>
        </div>
      </div>
      <span>جاهز</span>
    </div>
  );
}

/* ---------- taskbar ---------- */

function TaskButton({ label, width, running, active, children }: { label: string; width: string; running?: string; active?: boolean; children: ReactNode }) {
  return (
    <button type="button" aria-label={label} className={clsx('relative h-full shrink-0 flex items-center justify-center', width, active && 'bg-[#5a5a5a]')}>
      {children}
      {running && <i className={clsx('absolute bottom-0 inset-x-0 mx-auto h-[3px] bg-[#76b9ed]', running)} />}
    </button>
  );
}

function Taskbar() {
  return (
    <footer className="shrink-0 h-[50px] bg-[#2a2a2a] text-white flex items-center">
      <div className="flex-1 h-full flex items-center min-w-0">
        <button type="button" aria-label="الإشعارات" className="w-[68px] h-full border-l border-[#777] ml-[5px] pl-3.5">
          <svg viewBox="0 0 34 34" className="w-[34px] h-[34px]">
            <path d="M12 3h20v17H20l-5 5v-5h-3z" fill="#fff" />
            <path d="M16 7.500h12M16 11h12M20 14.500h8" stroke="#2a2a2a" strokeWidth="1.3" />
            <circle cx="12" cy="22" r="10" fill="#2f2f2f" stroke="#aaa" />
            <text x="12" y="27" fill="#fff" fontSize="13" textAnchor="middle" fontFamily="DejaVu Sans">٣</text>
          </svg>
        </button>
        <div className="w-[66px] text-center text-[13px] leading-6 whitespace-nowrap">
          <div>١٩:١٣</div>
          <div>٢٠٢٤/٠١/٠٥</div>
        </div>
        <span className="w-[58px] text-center text-[15px]">ENG</span>
        <svg viewBox="0 0 20 18" className="w-5 h-[18px]" fill="none" stroke="#fff" strokeWidth="1.2">
          <path d="M1 6h3l4-4v14l-4-4H1zM11 6.500c1.500 1.500 1.500 3.500 0 5" />
          <path d="M14 4c3 3 3 7 0 10M17 2c4 4 4 10 0 14" stroke="#888" />
        </svg>
        <svg viewBox="0 0 21 21" className="w-[21px] h-[21px] ml-2.5" fill="none" stroke="#fff" strokeWidth="1.2">
          <circle cx="10" cy="10" r="9.3" />
          <path d="M1 7h18M1 13h18M10 1c-5.500 5-5.500 13 0 18M10 1c5.500 5 5.500 13 0 18" />
          <circle cx="16" cy="16" r="4" fill="#2a2a2a" />
          <path d="M13.500 13.500l5 5" />
        </svg>
        <svg viewBox="0 0 16 9" className="w-4 h-[9px] ml-2.5" fill="none" stroke="#fff" strokeWidth="1.3"><path d="M1 8l7-7 7 7" /></svg>
        <svg viewBox="0 0 30 20" className="w-[30px] h-5 ml-[22px]" fill="none" stroke="#fff" strokeWidth="1.8">
          <path d="M1 1h24v18H3c-1.500 0-2-1-2-2zM25 3h4v14c0 1.500-1 2-2 2h-2" />
          <path d="M4 5.500h18M15 9.500h7M15 12.500h7M15 15.500h7M5 9h7v6.500H5z" />
        </svg>
        <span className="ml-2.5 text-[17px]">21°C</span>
        <span className="ml-2.5 text-[18px] whitespace-nowrap">غائم غالبًا</span>
      </div>
      <TaskButton label="أفلام" width="w-[57px]" running="w-[51px]">
        <svg viewBox="0 0 28 34" className="w-7 h-[34px]" fill="#fff">
          <rect x="1" y="14" width="26" height="19" rx="2" />
          <path d="M0 7.500l3.500-.7 2.500 4.500-5 1zM6 6.300l4-.8 2.500 4.500-4 .8zM12.500 5l4-.8L19 8.700l-4 .8zM19 3.700l4-.8 2.500 4.500-4 .8zM25 2.500l2-.5v5z" />
        </svg>
      </TaskButton>
      <TaskButton label="Excel" width="w-[61px]" running="w-[61px]" active>
        <svg viewBox="0 0 30 32" className="w-[30px] h-8">
          <path d="M8 3h21v26H8z" fill="#185c37" />
          <path d="M8 3h11v9H8z" fill="#21a366" />
          <path d="M19 3h10v9H19z" fill="#33c481" />
          <path d="M19 12h10v9H19z" fill="#107c41" />
          <rect y="8" width="15" height="15" rx="1.5" fill="#107c41" />
          <text x="7.5" y="20" fill="#fff" fontSize="12" fontWeight="bold" textAnchor="middle" fontFamily="Open Sans">X</text>
        </svg>
      </TaskButton>
      <TaskButton label="WinRAR" width="w-[62px]" running="w-[51px]">
        <svg viewBox="0 0 30 30" className="w-[30px] h-[30px]">
          <path d="M0 0h30v30H0z" fill="#e4e4e4" />
          <path d="M0 8h11v5H0z" fill="#f1bcd2" />
          <path d="M0 13h9v6H0z" fill="#e88bb5" />
          <path d="M0 19h8v11H0z" fill="#e8304a" />
          <path d="M8 22h2v8H8z" fill="#5a78b8" />
          <path d="M13 4v17M17 2v21M21 6v14" stroke="#555" strokeWidth="1.5" />
          <path d="M12 20v10M15 18v12M18 21v9M21 18v12M24 20v10M27 19v11" stroke="#333" strokeWidth="1.4" />
          <path d="M24 2v16" stroke="#aaa" strokeWidth="2" />
        </svg>
      </TaskButton>
      <TaskButton label="Firefox" width="w-[62px]">
        <svg viewBox="0 0 30 32" className="w-[30px] h-8">
          <path d="M15 31C6 31 1 25 1 17c0-5 2-8 4-11 0 2 1 3 2 4 2-2 5-2 8-2 1-4 2-6 4-8 1 4 3 5 5 8 0-1 1-2 1-2 3 4 4 8 4 12 0 8-6 13-14 13z" fill="#ff8a1f" />
          <path d="M15 31C6 31 1 25 1 17c0-2 .5-4 1-5 3 9 12 13 23 12-2 4-6 7-10 7z" fill="#f0304a" />
          <path d="M19 0c1 4 3 5 5 8 4 5 2 10 0 13 0-7-7-8-8-12 0-3 1-6 3-9z" fill="#ffd83b" />
          <circle cx="15" cy="17" r="6.5" fill="#7a46c8" />
          <path d="M8 12c4-2 6 0 9 1-3 1-3 3-6 3z" fill="#ff9a2b" />
        </svg>
      </TaskButton>
      <TaskButton label="البريد" width="w-[63px]">
        <svg viewBox="0 0 30 28" className="w-[30px] h-7" fill="#fff">
          <path d="M15 1 30 9v17H0V9z" />
          <path d="M0 9h30L18 16l7 6-10-5z" fill="#2a2a2a" />
        </svg>
      </TaskButton>
      <TaskButton label="المتجر" width="w-[62px]">
        <svg viewBox="0 0 30 32" className="w-[30px] h-8">
          <path d="M10 9V5c0-4 8-5 10 0v4" fill="none" stroke="#ddd" strokeWidth="1.6" />
          <path d="M1 9h28v19c0 2-1 3-3 3H4c-2 0-3-1-3-3z" fill="#fff" />
          <path d="M8 13h6v6H8z" fill="#e8502c" />
          <path d="M15.500 13h6v6h-6z" fill="#7fb83a" />
          <path d="M8 20.500h6v6H8z" fill="#2b9be0" />
          <path d="M15.500 20.500h6v6h-6z" fill="#fbb91f" />
        </svg>
      </TaskButton>
      <TaskButton label="مستكشف الملفات" width="w-[62px]" running="w-[52px]">
        <svg viewBox="0 0 28 26" className="w-7 h-[26px]">
          <path d="M0 1h10l3 3h14v5H0z" fill="#e5962b" />
          <path d="M0 7h28v17H0z" fill="#f9d06b" />
          <path d="M6 25V16c0-2 1-3 3-3h10c2 0 3 1 3 3v9h-4v-6h-8v6z" fill="#4a9fe0" />
        </svg>
      </TaskButton>
      <TaskButton label="Edge" width="w-[62px]">
        <svg viewBox="0 0 32 32" className="w-[30px] h-[30px]">
          <circle cx="16" cy="16" r="15.5" fill="#0f63b5" />
          <path d="M1 14C3 5 9 .5 17 .5 26 .5 31.500 7 31.500 14c0 5-4 7-8 7s-5-2-4-4c1-3-1-6-6-6-5-.5-10 1-12.500 3z" fill="#2fb8d8" />
          <path d="M18 .6C26 1 31.500 7 31.500 14c0 5-4 7-8 7s-5-2-4-4c5-5 3-12-1.500-16.400z" fill="#4fd08a" />
          <path d="M11 17c0 7 6 11 12 10 3 0 5-1 6-2-5 8-19 8-23 0-3-6 0-12 5-13 3-.5 6 0 7 2-4-1-7 0-7 3z" fill="#0b4c94" />
        </svg>
      </TaskButton>
      <TaskButton label="عرض المهام" width="w-[65px]">
        <svg viewBox="0 0 20 20" className="w-5 h-5" fill="none" stroke="#fff" strokeWidth="1.4">
          <path d="M8 0v4h12V0M8 7h12v7H8zM8 20v-4h12v4M2 0v5M2 10v10" />
          <path d="M0 6h4v3H0z" fill="#fff" stroke="none" />
        </svg>
      </TaskButton>
      <TaskButton label="Cortana" width="w-[59px]">
        <svg viewBox="0 0 20 20" className="w-5 h-5" fill="none" stroke="#fff" strokeWidth="2.5"><circle cx="10" cy="10" r="8.5" /></svg>
      </TaskButton>
      <label dir="rtl" className="w-[430px] shrink-0 h-full bg-[#f2f2f2] border border-[#c6c6c6] text-[#222] flex items-center pr-[13px] gap-4">
        <svg viewBox="0 0 20 20" className="w-5 h-5" fill="none" stroke="currentColor" strokeWidth="1.4">
          <circle cx="13" cy="7" r="6.2" />
          <path d="M8.500 11.500 1 19" />
        </svg>
        <input aria-label="بحث" placeholder="اكتب هنا للبحث" className="flex-1 bg-transparent outline-none text-[18px] placeholder:text-[#222]" />
      </label>
      <TaskButton label="ابدأ" width="w-[60px]">
        <svg viewBox="0 0 20 20" className="w-5 h-5" fill="#fff"><path d="M0 3l8.500-1.200v7.700H0zM9.500 1.600 20 0v9.500H9.500zM0 10.500h8.500v7.700L0 17zM9.500 10.500H20V20L9.500 18.400z" /></svg>
      </TaskButton>
    </footer>
  );
}

export default function App() {
  return (
    <div className="relative h-screen flex flex-col overflow-hidden bg-[#e6e6e6] [font-family:'Open_Sans','DejaVu_Sans',sans-serif]">
      <TitleBar />
      <Ribbon />
      <FormulaBar />
      <Sheet />
      <SheetTabs />
      <StatusBar />
      <Taskbar />
      <div
        dir="rtl"
        className="absolute left-[845px] bottom-3.5 w-[230px] text-center text-[64px] leading-[64px] font-bold text-[#a8a8a8]/35 pointer-events-none"
      >
        خمسات
      </div>
    </div>
  );
}
